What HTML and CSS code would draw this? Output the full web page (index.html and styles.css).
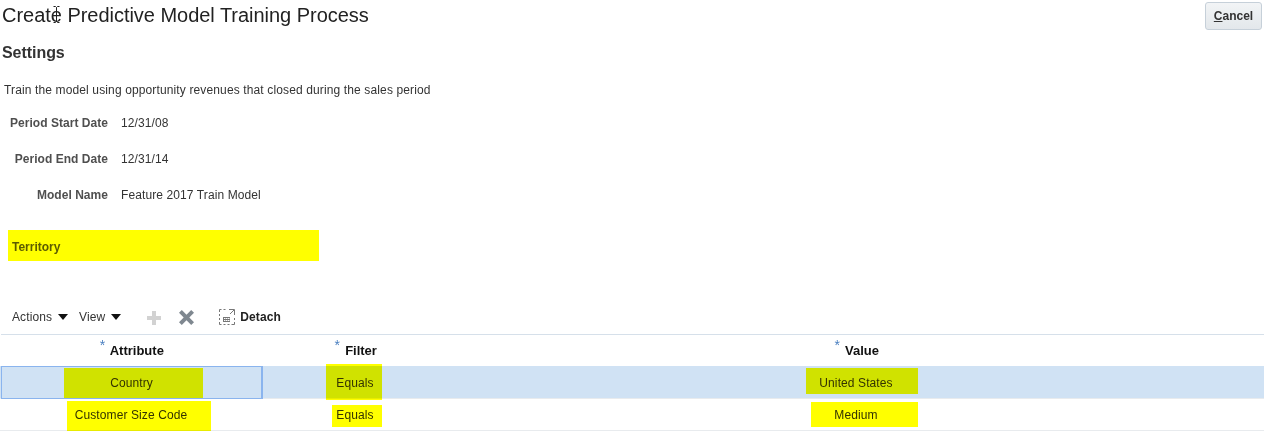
FILE: index.html
```html
<!DOCTYPE html>
<html lang="en">
<head>
  <meta charset="UTF-8">
  <title>Create Predictive Model Training Process</title>
  <link rel="stylesheet" href="styles.css">
</head>
<body>
  <header class="page-header">
    <h1>Create Predictive Model Training Process</h1>
    <button class="cancel-btn"><u>C</u>ancel</button>
    <!-- mouse cursor caught in the screenshot -->
    <svg class="ibeam" width="9" height="17" viewBox="0 0 9 17">
      <path d="M1.5 .5h2l1 1 1-1h2M4.5 1.5v14M1.5 16.500h2l1-1 1 1h2" fill="none" stroke="#222" stroke-width="1"/>
    </svg>
  </header>

  <h2 class="section-title">Settings</h2>
  <p class="intro">Train the model using opportunity revenues that closed during the sales period</p>

  <div class="form">
    <label>Period Start Date</label><span>12/31/08</span>
    <label>Period End Date</label><span>12/31/14</span>
    <label>Model Name</label><span>Feature 2017 Train Model</span>
  </div>

  <div class="territory">Territory</div>

  <div class="toolbar">
    <span class="menu">Actions <i class="caret"></i></span>
    <span class="menu">View <i class="caret"></i></span>
    <svg class="icon-add" width="14" height="14" viewBox="0 0 14 14">
      <path d="M5 0h4v5h5v4H9v5H5V9H0V5h5z" fill="#d2d2d2"/>
    </svg>
    <svg class="icon-delete" width="15" height="15" viewBox="0 0 16 16">
      <path d="M3 0l5 5 5-5 3 3-5 5 5 5-3 3-5-5-5 5-3-3 5-5-5-5z" fill="#7f8890"/>
    </svg>
    <svg class="icon-detach" width="16" height="16" viewBox="0 0 16 16">
      <path d="M.5 3V.5h2M4.500 .5h2M.5 5v2M.5 9v2M.5 13v2.500h2M4.500 15.500h2M8.500 15.500h2M12.500 15.500h3V13M15.500 11V9" fill="none" stroke="#777"/>
      <path d="M10 .5h5.500V6M15 1l-4 4" fill="none" stroke="#777"/>
      <path d="M4 8h7v5H4z" fill="#777"/>
      <path d="M5 9h1.500v1H5zM7 9h1.500v1H7zM9 9h1.500v1H9zM5 11h1.500v1H5zM7 11h1.500v1H7zM9 11h1.500v1H9z" fill="#fff"/>
    </svg>
    <span class="detach">Detach</span>
  </div>

  <div class="table">
    <div class="row head">
      <div class="cell"><sup>*</sup> Attribute</div>
      <div class="cell"><sup>*</sup> Filter</div>
      <div class="cell"><sup>*</sup> Value</div>
    </div>
    <div class="row selected">
      <div class="cell current">Country<b class="mark m-country"></b></div>
      <div class="cell">Equals<b class="mark m-equals1"></b></div>
      <div class="cell">United States<b class="mark m-us"></b></div>
    </div>
    <div class="row">
      <div class="cell">Customer Size Code<b class="mark m-size"></b></div>
      <div class="cell">Equals<b class="mark m-equals2"></b></div>
      <div class="cell">Medium<b class="mark m-medium"></b></div>
    </div>
  </div>
</body>
</html>
```

FILE: styles.css
```css
body {
  font-family: 'Liberation Sans', Arial, sans-serif;
  font-size: 12px;
  letter-spacing: 0.1px;
  color: #333;
  background-color: #fff;
  margin: 0;
  padding: 0;
}

.page-header {
  position: relative;
  display: flex;
  justify-content: space-between;
  align-items: flex-start;
  height: 32px;
}

h1 {
  margin: 0 0 0 2px;
  font-size: 20px;
  font-weight: normal;
  line-height: 30px;
  letter-spacing: -0.03px;
  color: #222;
}

.ibeam {
  position: absolute;
  left: 52px;
  top: 6px;
}

.cancel-btn {
  margin: 2px 4px 0 0;
  width: 57px;
  height: 28px;
  padding: 0;
  font-family: inherit;
  font-size: 12px;
  font-weight: bold;
  color: #333;
  background: linear-gradient(#f2f4f6, #e3e7eb);
  border: 1px solid #c6d0d9;
  border-radius: 3px;
}

.section-title {
  margin: 11px 0 0 2px;
  font-size: 16px;
  line-height: 20px;
  letter-spacing: -0.05px;
  color: #333;
}

.intro {
  margin: 19px 0 0 4px;
  line-height: 16px;
  letter-spacing: 0.13px;
}

.form {
  display: grid;
  grid-template-columns: 108px auto;
  grid-auto-rows: 36px;
  column-gap: 13px;
  align-items: center;
  margin-top: 7px;
}

.form label {
  font-weight: bold;
  letter-spacing: 0.04px;
  color: #4f4f4f;
  text-align: right;
}

.territory {
  width: 307px;
  height: 31px;
  margin: 17px 0 0 8px;
  padding-left: 4px;
  line-height: 34px;
  letter-spacing: 0;
  font-weight: bold;
  color: #5c5c00;
  background-color: #ffff00;
}

.toolbar {
  display: flex;
  align-items: center;
  height: 31px;
  margin: 40px 0 0 1px;
  border-bottom: 1px solid #d6e0ea;
  padding: 0 0 2px 11px;
  width: 1252px;
}

.menu {
  display: flex;
  align-items: center;
  margin-right: 11px;
}

.caret {
  display: block;
  margin: 1px 0 0 6px;
  border-left: 5px solid transparent;
  border-right: 5px solid transparent;
  border-top: 6px solid #111;
}

.icon-add {
  margin: 2px 0 0 15px;
}

.icon-delete {
  margin: 2px 0 0 18px;
}

.icon-detach {
  margin: 1px 0 0 25px;
}

.detach {
  margin-left: 5px;
  font-weight: bold;
  color: #222;
}

.table {
  width: 1264px;
}

.row {
  display: grid;
  grid-template-columns: 262px 186px 816px;
  height: 31px;
  border-bottom: 1px solid #e8ebee;
}

.row.head {
  border-bottom: none;
  font-size: 13px;
  letter-spacing: 0;
  font-weight: bold;
  color: #111;
  text-align: center;
}

.head sup {
  position: relative;
  left: -1.5px;
  font-weight: normal;
  color: #4a7fc0;
  font-size: 14px;
  line-height: 0;
}

.row.selected {
  height: 32px;
  background-color: #d0e2f4;
}

.cell {
  position: relative;
  text-align: center;
  line-height: 33px;
}

.selected .cell {
  line-height: 35px;
}

.selected .cell.current {
  margin: 0 -1px 0 1px;
  box-sizing: border-box;
  height: 33px;
  line-height: 33px;
  border: 1px solid #8ab4ee;
  border-right-width: 2px;
}

.head .cell {
  padding-left: 3px;
  line-height: 32px;
}

/* yellow highlighter boxes drawn over the table */
.mark {
  position: absolute;
  background-color: #ffff00;
  mix-blend-mode: multiply;
}

.m-country { left: 62px; top: 1px; width: 139px; height: 30px; }
.m-equals1 { left: 64px; top: -2px; width: 56px; height: 36px; }
.m-us { left: 358px; top: 2px; width: 112px; height: 26px; }
.m-size { left: 67px; top: 2px; width: 144px; height: 32px; }
.m-equals2 { left: 70px; top: 6px; width: 50px; height: 22px; }
.m-medium { left: 363px; top: 3px; width: 107px; height: 25px; }
```
